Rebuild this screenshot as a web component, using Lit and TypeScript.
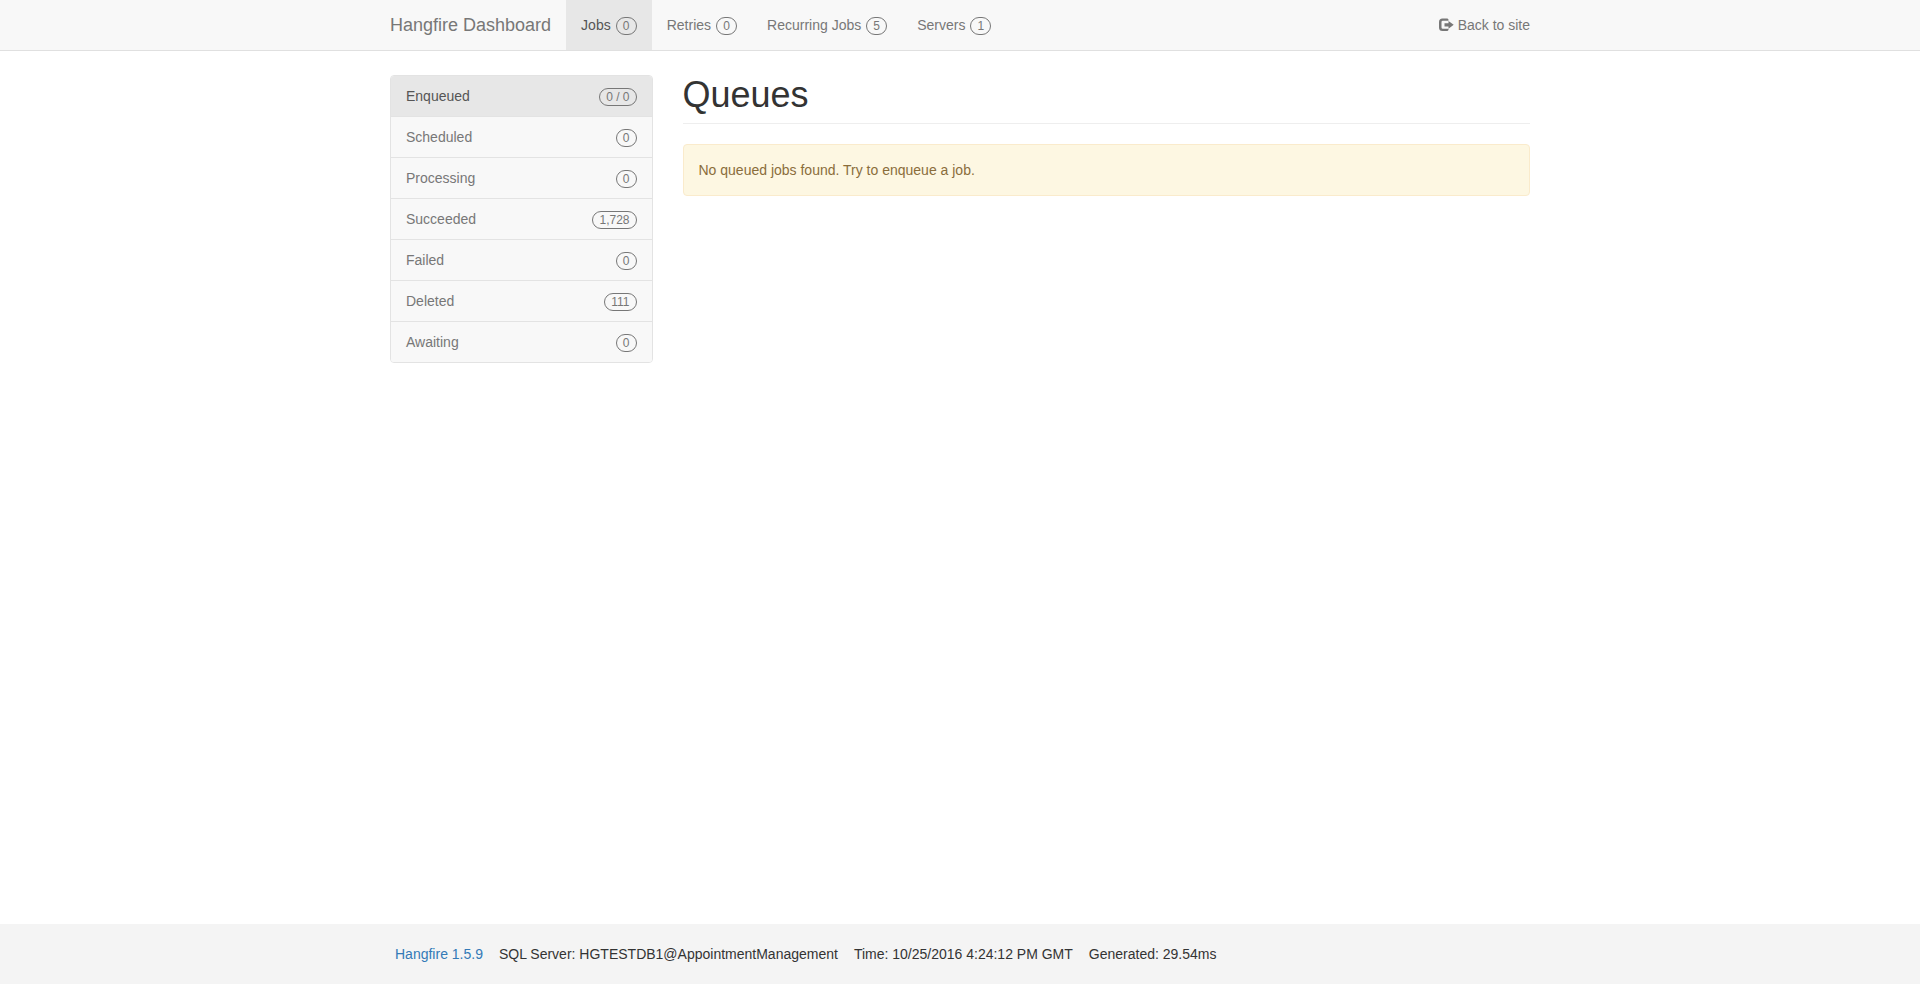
import { LitElement, html, css } from "lit";
import { customElement } from "lit/decorators.js";
import { classMap } from "lit/directives/class-map.js";

interface Entry {
  label: string;
  count: string;
  active?: boolean;
}

const NAV: Entry[] = [
  { label: "Jobs", count: "0", active: true },
  { label: "Retries", count: "0" },
  { label: "Recurring Jobs", count: "5" },
  { label: "Servers", count: "1" },
];

const STATES: Entry[] = [
  { label: "Enqueued", count: "0 / 0", active: true },
  { label: "Scheduled", count: "0" },
  { label: "Processing", count: "0" },
  { label: "Succeeded", count: "1,728" },
  { label: "Failed", count: "0" },
  { label: "Deleted", count: "111" },
  { label: "Awaiting", count: "0" },
];

@customElement("app-root")
export class AppRoot extends LitElement {
  static styles = css`
    :host {
      display: flex;
      flex-direction: column;
      min-height: 100vh;
      background: #fff;
      color: #333;
      font-family: "Liberation Sans", Arial, sans-serif;
      font-size: 14px;
      line-height: 20px;
    }
    * {
      box-sizing: border-box;
    }
    a {
      color: #777;
      text-decoration: none;
    }
    ul {
      list-style: none;
      margin: 0;
      padding: 0;
    }
    .container {
      width: 100%;
      max-width: 1170px;
      margin: 0 auto;
      padding: 0 15px;
    }
    .navbar {
      background: #f8f8f8;
      border-bottom: 1px solid #e0e0e0;
    }
    .bar {
      display: flex;
      flex-wrap: wrap;
    }
    .brand {
      padding: 15px 15px 15px 0;
      font-size: 18px;
    }
    .nav {
      display: flex;
      flex-wrap: wrap;
    }
    .nav-link {
      display: flex;
      align-items: center;
      gap: 5px;
      padding: 15px;
    }
    .nav-link.active {
      background: #e7e7e7;
      color: #555;
    }
    .back {
      margin-left: auto;
      padding: 15px 0;
      display: flex;
      align-items: center;
      gap: 4px;
    }
    .icon {
      width: 15px;
      height: 14px;
      fill: currentColor;
    }
    .badge {
      min-width: 21px;
      margin-top: 2px;
      border: 1px solid #777;
      border-radius: 10px;
      padding: 2px 6px;
      color: #777;
      font-size: 12px;
      line-height: 12px;
      text-align: center;
      white-space: nowrap;
    }
    .content {
      flex: 1;
      display: grid;
      grid-template-columns: repeat(12, 1fr);
      align-items: start;
      gap: 30px;
      padding-top: 24px;
      padding-bottom: 20px;
    }
    .sidebar {
      grid-column: span 3;
      border: 1px solid #e3e3e3;
      border-radius: 4px;
      overflow: hidden;
    }
    .state {
      display: flex;
      justify-content: space-between;
      align-items: center;
      padding: 10px 15px;
      background: #f8f8f8;
    }
    .state.active {
      background: #e7e7e7;
      color: #555;
    }
    li + li .state {
      border-top: 1px solid #e3e3e3;
    }
    .main {
      grid-column: span 9;
    }
    .title {
      margin: 0 0 20px;
      padding-bottom: 8px;
      border-bottom: 1px solid #eee;
      font-size: 36px;
      font-weight: 500;
      line-height: 40px;
    }
    .alert {
      padding: 15px;
      border: 1px solid #faebcc;
      border-radius: 4px;
      background: #fdf7e2;
      color: #8a6d3b;
    }
    .footer {
      background: #f4f4f4;
      padding: 20px 0;
    }
    .facts {
      display: flex;
      flex-wrap: wrap;
      gap: 0 16px;
      padding: 0 5px;
    }
    .version {
      color: #337ab7;
    }
  `;

  render() {
    return html`
      <header class="navbar">
        <div class="container bar">
          <a class="brand" href="#">Hangfire Dashboard</a>
          <nav>
            <ul class="nav">
              ${NAV.map(
                (n) => html`<li>
                  <a class=${classMap({ "nav-link": true, active: !!n.active })} href="#">
                    <span>${n.label}</span><span class="badge">${n.count}</span>
                  </a>
                </li>`
              )}
            </ul>
          </nav>
          <a class="back" href="#">
            <svg class="icon" viewBox="0 0 15 14" aria-hidden="true">
              <path
                d="M3.500 .5H8.500L9.500 1.500V2.700H3.800Q2.500 2.700 2.500 4V9.500Q2.500 10.800 3.800 10.800H9.500V12L8.500 13H3.500Q0 13 0 9.500V4Q0 .5 3.500 .5Z"
              />
              <path d="M5.500 5.200H9.500V2.900L14.700 6.800 9.500 10.700V8.500H5.500Z" />
            </svg>
            <span>Back to site</span>
          </a>
        </div>
      </header>

      <div class="container content">
        <nav class="sidebar" aria-label="Job states">
          <ul>
            ${STATES.map(
              (s) => html`<li>
                <a class=${classMap({ state: true, active: !!s.active })} href="#">
                  <span>${s.label}</span><span class="badge">${s.count}</span>
                </a>
              </li>`
            )}
          </ul>
        </nav>
        <main class="main">
          <h1 class="title">Queues</h1>
          <div class="alert">No queued jobs found. Try to enqueue a job.</div>
        </main>
      </div>

      <footer class="footer">
        <div class="container">
          <ul class="facts">
            <li><a class="version" href="#">Hangfire 1.5.9</a></li>
            <li>SQL Server: HGTESTDB1@AppointmentManagement</li>
            <li>Time: 10/25/2016 4:24:12 PM GMT</li>
            <li>Generated: 29.54ms</li>
          </ul>
        </div>
      </footer>
    `;
  }
}
